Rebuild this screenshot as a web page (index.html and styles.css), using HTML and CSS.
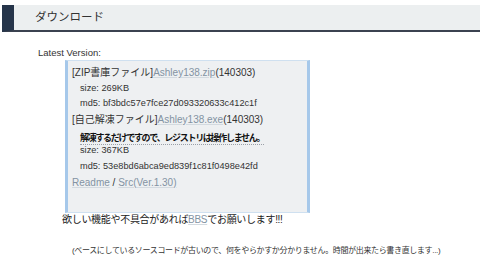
FILE: index.html
```html
<!DOCTYPE html>
<html lang="ja">
<head>
<meta charset="utf-8">
<link rel="stylesheet" href="styles.css">
</head>
<body>
<div class="page">
  <h2 class="section-title">ダウンロード</h2>
  <div class="content">
    <p class="label">Latest Version:</p>
    <div class="download-box">
      <div class="row main">[ZIP書庫ファイル]<a class="link" href="#">Ashley138.zip</a>(140303)</div>
      <div class="row small">size: 269KB</div>
      <div class="row small">md5: bf3bdc57e7fce27d093320633c412c1f</div>
      <div class="row main">[自己解凍ファイル]<a class="link" href="#">Ashley138.exe</a>(140303)</div>
      <div class="row note"><span class="strong">解凍するだけですので、レジストリは操作しません。</span></div>
      <div class="row small">size: 367KB</div>
      <div class="row small">md5: 53e8bd6abca9ed839f1c81f0498e42fd</div>
      <div class="row main"><a class="link" href="#">Readme</a> / <a class="link" href="#">Src(Ver.1.30)</a></div>
    </div>
    <p class="request">欲しい機能や不具合があれば<a class="link" href="#">BBS</a>でお願いします!!!</p>
    <p class="remark">(ベースにしているソースコードが古いので、何をやらかすか分かりません。時間が出来たら書き直します...)</p>
  </div>
</div>
</body>
</html>
```

FILE: styles.css
```css
html, body {
  margin: 0;
  padding: 0;
  background: #ffffff;
}
body {
  font-family: "Liberation Sans", "Noto Sans CJK JP", sans-serif;
  color: #222;
}
.page {
  padding-top: 5px;
}
.section-title {
  margin: 0 0 0 2px;
  height: 25px;
  line-height: 25px;
  background: #eceff0;
  border-left: 12px solid #26354a;
  border-bottom: 2px solid #3b4250;
  padding-left: 21px;
  font-size: 11.5px;
  font-weight: normal;
  color: #333;
}
.content {
  padding-top: 14px;
}
.label {
  margin: 0 0 0 38px;
  font-size: 9.5px;
  line-height: 13px;
  color: #333;
}
.download-box {
  margin: 1px 0 0 65px;
  width: 235px;
  background: #eef0f2;
  border-left: 3px solid #a6c8ea;
  border-right: 3px solid #a6c8ea;
  border-top: 1px solid #cfe0f0;
  border-bottom: 1px solid #cfe0f0;
  padding: 4px 0 21px 4px;
}
.row {
  line-height: 15.7px;
  height: 15.7px;
  white-space: nowrap;
}
.main {
  font-size: 10px;
  color: #333;
}
.small {
  padding-left: 8px;
  font-size: 9.2px;
  color: #333;
}
.note {
  padding-left: 8px;
}
.strong {
  font-size: 9px;
  font-weight: bold;
  letter-spacing: -1.3px;
  color: #111;
  border-bottom: 1px dotted #9aa0a8;
  padding-bottom: 1px;
}
.link {
  color: #8393a3;
  text-decoration: underline;
  text-decoration-color: #d3dae0;
}
.request {
  margin: 0 0 0 62px;
  font-size: 10px;
  line-height: 13px;
  letter-spacing: -0.3px;
  color: #222;
}
.remark {
  margin: 19px 0 0 72px;
  font-size: 8px;
  line-height: 12px;
  letter-spacing: -0.35px;
  color: #333;
}
```
